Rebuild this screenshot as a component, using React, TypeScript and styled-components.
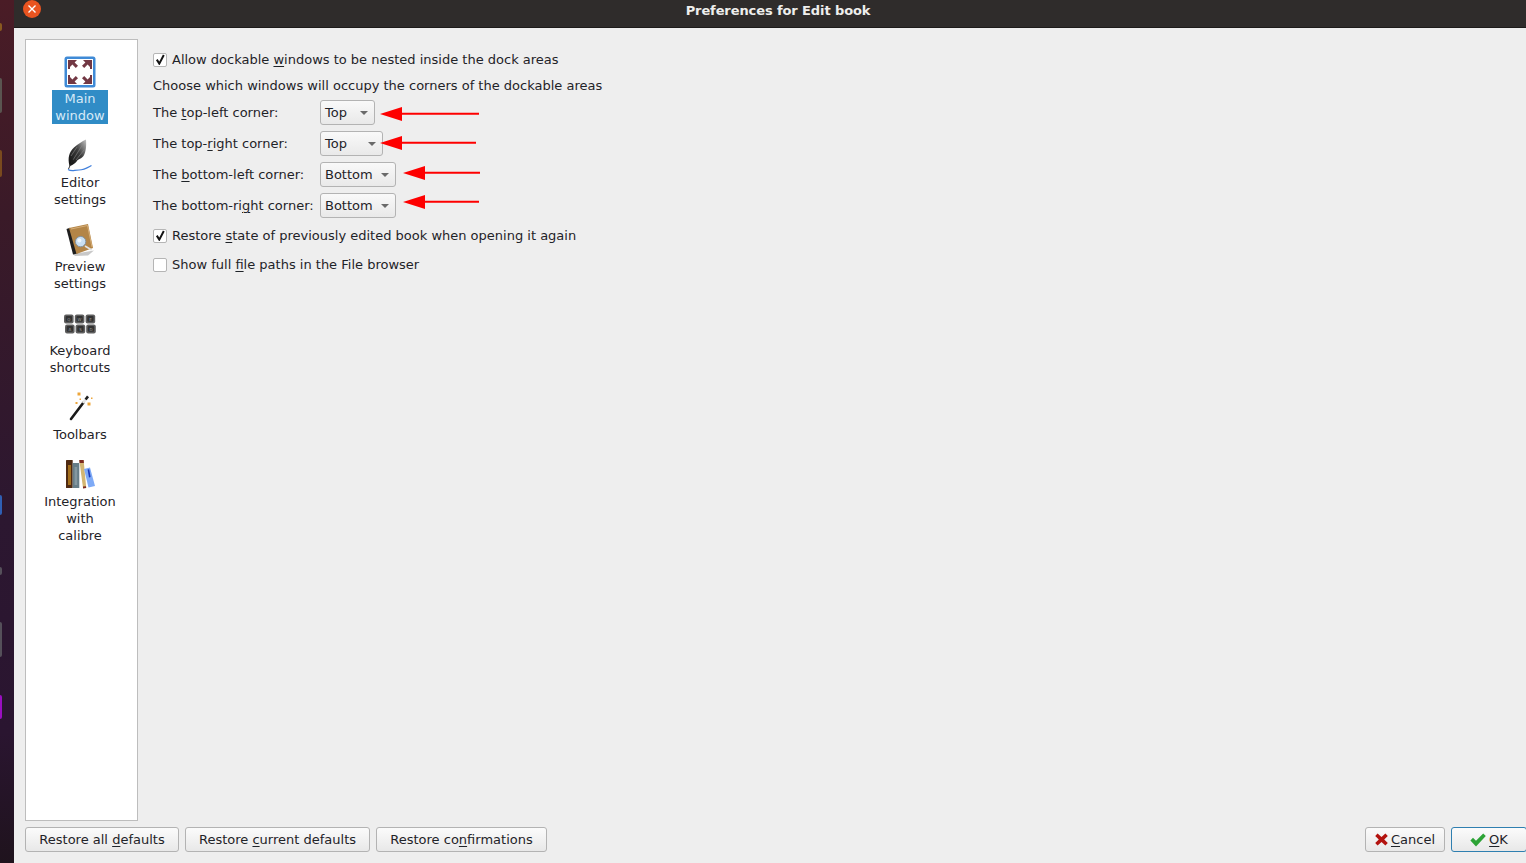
import React from "react";
import styled, { createGlobalStyle } from "styled-components";

const Global = createGlobalStyle`
  html, body { margin: 0; padding: 0; height: 100%; overflow: hidden; }
  body { font-family: "DejaVu Sans", sans-serif; font-size: 13px; color: #1f2328; }
`;

const Desktop = styled.div`
  width: 1526px; height: 863px; display: flex; overflow: hidden;
  background: #2a1526;
`;
const Strip = styled.div`
  width: 14px; flex: none; position: relative;
  background: linear-gradient(180deg, #4a1c26 0%, #3a1a28 25%, #2c1730 60%, #2a1530 85%, #1f131d 100%);
`;
const Dock = styled.div<{ $top: number; $h: number; $c: string }>`
  position: absolute; left: 0; width: 2px; top: ${p => p.$top}px; height: ${p => p.$h}px;
  background: ${p => p.$c}; border-radius: 0 2px 2px 0;
`;
const Win = styled.div`
  flex: 1; min-width: 0; display: flex; flex-direction: column; background: #eeeeee;
`;
const TitleBar = styled.div`
  height: 28px; flex: none; box-sizing: border-box; background: #2f2c2b; border-bottom: 1px solid #1d1b1a;
  display: flex; align-items: flex-start; position: relative; justify-content: center;
`;
const Title = styled.div`
  font-weight: 700; font-size: 13px; letter-spacing: -0.1px; line-height: 20px; color: #eeeeec;
  padding-left: 16px; padding-top: 1px;
`;
const CloseBtn = styled.div`
  position: absolute; left: 9px; top: 0px; width: 18px; height: 18px; border-radius: 50%;
  background: #e95420; display: flex; align-items: center; justify-content: center;
`;
const Body = styled.div`
  flex: 1; min-height: 0; display: flex; flex-direction: column; padding: 11px 0 11px 11px;
`;
const Main = styled.div`
  flex: 1; min-height: 0; display: flex; gap: 15px;
`;
const Sidebar = styled.div`
  width: 113px; flex: none; box-sizing: border-box; background: #fff; border: 1px solid #bdbdbd;
  display: flex; flex-direction: column; align-items: center; padding-top: 15px; padding-right: 3px;
`;
const NavItem = styled.div<{ $gap: number }>`
  display: flex; flex-direction: column; align-items: center; margin-bottom: ${p => p.$gap}px;
`;
const NavIcon = styled.div`
  width: 34px; height: 34px; display: flex; align-items: center; justify-content: center;
  margin-bottom: 1px;
`;
const NavLabel = styled.div<{ $active?: boolean }>`
  text-align: center; line-height: 17px; font-size: 13px; white-space: pre-line;
  color: ${p => (p.$active ? "#d5e9f7" : "#1f2328")};
  background: ${p => (p.$active ? "#308cc6" : "transparent")};
  ${p => p.$active ? "width: 56px; box-sizing: border-box;" : ""}
`;
const Content = styled.div`
  flex: 1; display: flex; flex-direction: column; padding-top: 12px;
`;
const U = styled.span`
  text-decoration: underline; text-underline-offset: 2px; text-decoration-thickness: 1px;
`;
const CheckRow = styled.label<{ $mb: number }>`
  display: flex; align-items: center; gap: 5px; height: 17px; margin-bottom: ${p => p.$mb}px;
  line-height: 17px;
`;
const Box = styled.span`
  width: 12px; height: 12px; flex: none; border: 1px solid #b5b5b5; border-radius: 2px; background: #fff;
  display: flex; align-items: center; justify-content: center;
`;
const Plain = styled.div`
  height: 17px; line-height: 17px; margin-bottom: 6px;
`;
const Row = styled.div<{ $mb: number }>`
  display: flex; align-items: center; height: 25px; margin-bottom: ${p => p.$mb}px; position: relative;
`;
const RowLabel = styled.div`
  width: 167px; flex: none; line-height: 17px;
`;
const Combo = styled.div<{ $w: number }>`
  width: ${p => p.$w}px; height: 25px; box-sizing: border-box; border: 1px solid #b3b3b3; border-radius: 3px;
  background: linear-gradient(180deg, #f9f9f9, #e9e9e9); padding: 0 0 0 4px;
  display: flex; align-items: center; justify-content: space-between; position: relative;
`;
const Caret = styled.span`
  width: 0; height: 0; border-left: 4px solid transparent; border-right: 4px solid transparent;
  border-top: 4px solid #6a6a6a; margin-right: 6px;
`;
const Arrow = styled.svg<{ $left: number; $top: number }>`
  position: absolute; left: ${p => p.$left}px; top: ${p => p.$top}px;
`;
const Footer = styled.div`
  display: flex; align-items: center; height: 25px; margin-top: 6px; margin-right: -1px; gap: 6px; flex: none;
`;
const Btn = styled.div<{ $w: number; $primary?: boolean }>`
  width: ${p => p.$w}px; height: 25px; box-sizing: border-box; flex: none;
  border: 1px solid ${p => (p.$primary ? "#2f7fb0" : "#b3b3b3")}; border-radius: 3px;
  background: linear-gradient(180deg, #fbfbfb, #e8e8e8);
  display: flex; align-items: center; justify-content: center; gap: 3px; line-height: 17px;
`;
const Spacer = styled.div`flex: 1;`;

const RedArrow = ({ left, top, w }: { left: number; top: number; w: number }) => (
  <Arrow $left={left} $top={top} width={w} height={16} viewBox={`0 0 ${w} 16`}>
    <path d={`M0 8 L22 1 L22 6.8 L${w} 6.8 L${w} 8.8 L22 8.8 L22 15 Z`} fill="#fe0000" />
  </Arrow>
);

const Tick = () => (
  <svg width="11" height="11" viewBox="0 0 11 11">
    <path d="M1.8 5.6 L4.3 9.6 L8.8 1" fill="none" stroke="#141414" strokeWidth="2" />
  </svg>
);

const MainIcon = () => (
  <svg width="32" height="32" viewBox="0 0 32 32">
    <rect x="0.5" y="0.5" width="31" height="31" rx="2.5" fill="#3f8ad6" />
    <rect x="3" y="3" width="26" height="26" fill="#fff" />
    <g fill="#723844">
      <path d="M4 4 H13 L10.6 6.4 L14 9.8 L11.8 12 L8.4 8.6 L6 11 V13 H4 Z" />
      <path d="M28 4 H19 L21.4 6.4 L18 9.8 L20.2 12 L23.6 8.6 L26 11 V13 H28 Z" />
      <path d="M4 28 H13 L10.6 25.6 L14 22.2 L11.8 20 L8.4 23.4 L6 21 V19 H4 Z" />
      <path d="M28 28 H19 L21.4 25.6 L18 22.2 L20.2 20 L23.6 23.4 L26 21 V19 H28 Z" />
    </g>
  </svg>
);

const QuillIcon = () => (
  <svg width="32" height="34" viewBox="0 0 32 34">
    <defs>
      <linearGradient id="q" x1="0" y1="1" x2="1" y2="0">
        <stop offset="0" stopColor="#0e0e0e" />
        <stop offset="0.55" stopColor="#3c3c3c" />
        <stop offset="1" stopColor="#c4c4c4" />
      </linearGradient>
    </defs>
    <path d="M5.5 27 C3.5 19 5 13 10 8.5 C14 5 18 2.5 22 0.5 C22.5 7 22 13 19.5 17 C18 19.5 14 20 13 22 C11 24.5 9 26 5.5 27 Z" fill="url(#q)" />
    <path d="M9 21 L19 5 M7 17 L13 8 M12 21 L20 11" stroke="#8a8a8a" strokeWidth="0.6" fill="none" />
    <path d="M4.5 30 L9 20" stroke="#222" strokeWidth="0.9" />
    <path d="M4 30.5 C8 33 10 31 15 31 C20 31 23 29 27.5 26.5" fill="none" stroke="#3f7fdc" strokeWidth="1.2" />
  </svg>
);

const BookIcon = () => (
  <svg width="32" height="34" viewBox="0 0 32 34">
    <path d="M9 31 L30 27.5 L24 32.5 L11 33 Z" fill="#aaa" opacity="0.65" />
    <path d="M2.5 6 L6 4.8 L13.5 30.5 L9 31.5 Z" fill="#1f1f1f" />
    <path d="M5 5 L24 1 L29 25 L12.5 31 Z" fill="#b38547" />
    <path d="M7 6 L23.5 2.5 L28 24" fill="none" stroke="#d6ae78" strokeWidth="1" />
    <path d="M21 23 L27.7 27" stroke="#e3e3e3" strokeWidth="1.6" />
    <circle cx="16.6" cy="18.6" r="5.2" fill="#c9dff2" stroke="#8493a0" />
    <circle cx="15.4" cy="17.4" r="2" fill="#eef6fc" />
  </svg>
);

const KeyCap = ({ x, y, t }: { x: number; y: number; t: string }) => (
  <g>
    <rect x={x} y={y} width="9.6" height="9" rx="2" fill="#5e5e5e" />
    <rect x={x + 1.6} y={y + 1.4} width="6.4" height="5.8" rx="1" fill="#323232" />
    <text x={x + 4.8} y={y + 6.2} fontSize="4" textAnchor="middle" fill="#9a9a9a" fontFamily="DejaVu Sans, sans-serif">{t}</text>
  </g>
);

const KeyIcon = () => (
  <svg width="32" height="20" viewBox="0 0 32 20">
    <KeyCap x={0} y={0.5} t="Q" />
    <KeyCap x={10.8} y={0.5} t="W" />
    <KeyCap x={21.6} y={0.5} t="E" />
    <KeyCap x={1} y={10.5} t="A" />
    <KeyCap x={11.6} y={10.5} t="S" />
    <KeyCap x={22.2} y={10.5} t="D" />
  </svg>
);

const WandIcon = () => (
  <svg width="32" height="32" viewBox="0 0 32 32">
    <path d="M7 27 L19.5 10.5" stroke="#1a1a1a" strokeWidth="2.6" strokeLinecap="round" />
    <path d="M19 11 L22 7" stroke="#e6e6e6" strokeWidth="2.6" />
    <path d="M21.6 7.5 L24 4.4" stroke="#1e1e1e" strokeWidth="2.6" />
    <g fill="#eda63a">
      <rect x="13.5" y="0.5" width="3" height="3" />
      <rect x="23.5" y="10.5" width="3" height="3" />
      <rect x="11.5" y="10" width="2" height="2" />
      <rect x="15.5" y="6.5" width="1.5" height="1.5" />
      <rect x="27" y="5.5" width="1.5" height="1.5" />
    </g>
  </svg>
);

const BooksIcon = () => (
  <svg width="32" height="32" viewBox="0 0 32 32">
    <rect x="2" y="1" width="6.7" height="28" rx="0.5" fill="#4f2a12" />
    <rect x="4" y="6" width="3" height="20" fill="#b37b1f" opacity="0.85" />
    <rect x="8.7" y="4" width="6.6" height="25" fill="#667d87" />
    <rect x="10.6" y="8" width="2.6" height="18" fill="#84979f" />
    <path d="M15.3 1 L19.6 1 L22.2 28.6 L19 29 Z" fill="#d3b673" />
    <path d="M15.3 1 L19.6 1 L19.9 4 L15.5 4 Z" fill="#7c2a20" />
    <path d="M19 27.6 L22 27.2 L22.2 29 L19 29.4 Z" fill="#7c2a20" />
    <path d="M20 10 L26 8.5 L31 27 L24.5 28.5 Z" fill="#7eaaf6" />
    <path d="M23.6 10.6 L25.2 10.2 L26.6 18 L25 18.4 Z" fill="#1936b8" />
  </svg>
);

const XSmall = () => (
  <svg width="13" height="13" viewBox="0 0 13 13">
    <path d="M2.6 .6 L6.5 4 L10.4 .6 L12.8 3 L9.2 6.5 L12.8 10 L10.4 12.4 L6.5 9 L2.6 12.4 L.2 10 L3.8 6.5 L.2 3 Z" fill="#b3130f" />
  </svg>
);
const Check = () => (
  <svg width="16" height="14" viewBox="0 0 16 14">
    <path d="M.4 7.5 L3 4.8 L6 7.8 L13.2 .6 L15.8 3 L6 13.4 Z" fill="#2da336" />
  </svg>
);

export default function App() {
  return (
    <Desktop>
      <Global />
      <Strip>
        <Dock $top={23} $h={8} $c="#8a5a20" />
        <Dock $top={78} $h={35} $c="#5a5550" />
        <Dock $top={150} $h={27} $c="#7a4a1e" />
        <Dock $top={495} $h={20} $c="#2f5fb4" />
        <Dock $top={567} $h={8} $c="#55505a" />
        <Dock $top={622} $h={35} $c="#55505a" />
        <Dock $top={695} $h={24} $c="#9a0fc0" />
      </Strip>
      <Win>
        <TitleBar>
          <CloseBtn>
            <svg width="10" height="10" viewBox="0 0 10 10">
              <path d="M1.5 1.5 L8.5 8.5 M8.5 1.5 L1.5 8.5" stroke="#fff" strokeWidth="1.4" />
            </svg>
          </CloseBtn>
          <Title>Preferences for Edit book</Title>
        </TitleBar>
        <Body>
          <Main>
            <Sidebar>
              <NavItem $gap={15}>
                <NavIcon><MainIcon /></NavIcon>
                <NavLabel $active>{"Main\nwindow"}</NavLabel>
              </NavItem>
              <NavItem $gap={15}>
                <NavIcon><QuillIcon /></NavIcon>
                <NavLabel>{"Editor\nsettings"}</NavLabel>
              </NavItem>
              <NavItem $gap={15}>
                <NavIcon><BookIcon /></NavIcon>
                <NavLabel>{"Preview\nsettings"}</NavLabel>
              </NavItem>
              <NavItem $gap={15}>
                <NavIcon><KeyIcon /></NavIcon>
                <NavLabel>{"Keyboard\nshortcuts"}</NavLabel>
              </NavItem>
              <NavItem $gap={15}>
                <NavIcon><WandIcon /></NavIcon>
                <NavLabel>Toolbars</NavLabel>
              </NavItem>
              <NavItem $gap={0}>
                <NavIcon><BooksIcon /></NavIcon>
                <NavLabel>{"Integration\nwith\ncalibre"}</NavLabel>
              </NavItem>
            </Sidebar>
            <Content>
              <CheckRow $mb={9}>
                <Box><Tick /></Box>
                <span>Allow dockable <U>w</U>indows to be nested inside the dock areas</span>
              </CheckRow>
              <Plain>Choose which windows will occupy the corners of the dockable areas</Plain>
              <Row $mb={6}>
                <RowLabel>The <U>t</U>op-left corner:</RowLabel>
                <Combo $w={55}>Top<Caret /></Combo>
                <RedArrow left={227} top={6} w={99} />
              </Row>
              <Row $mb={6}>
                <RowLabel>The top-<U>r</U>ight corner:</RowLabel>
                <Combo $w={63}>Top<Caret /></Combo>
                <RedArrow left={227} top={4} w={96} />
              </Row>
              <Row $mb={6}>
                <RowLabel>The <U>b</U>ottom-left corner:</RowLabel>
                <Combo $w={76}>Bottom<Caret /></Combo>
                <RedArrow left={250} top={3} w={77} />
              </Row>
              <Row $mb={9}>
                <RowLabel>The bottom-ri<U>g</U>ht corner:</RowLabel>
                <Combo $w={76}>Bottom<Caret /></Combo>
                <RedArrow left={250} top={1} w={76} />
              </Row>
              <CheckRow $mb={12}>
                <Box><Tick /></Box>
                <span>Restore <U>s</U>tate of previously edited book when opening it again</span>
              </CheckRow>
              <CheckRow $mb={0}>
                <Box />
                <span>Show full <U>f</U>ile paths in the File browser</span>
              </CheckRow>
            </Content>
          </Main>
          <Footer>
            <Btn $w={154}><span>Restore all <U>d</U>efaults</span></Btn>
            <Btn $w={185}><span>Restore <U>c</U>urrent defaults</span></Btn>
            <Btn $w={171}><span>Restore co<U>n</U>firmations</span></Btn>
            <Spacer />
            <Btn $w={80}><XSmall /><span><U>C</U>ancel</span></Btn>
            <Btn $w={76} $primary><Check /><span><U>O</U>K</span></Btn>
          </Footer>
        </Body>
      </Win>
    </Desktop>
  );
}
